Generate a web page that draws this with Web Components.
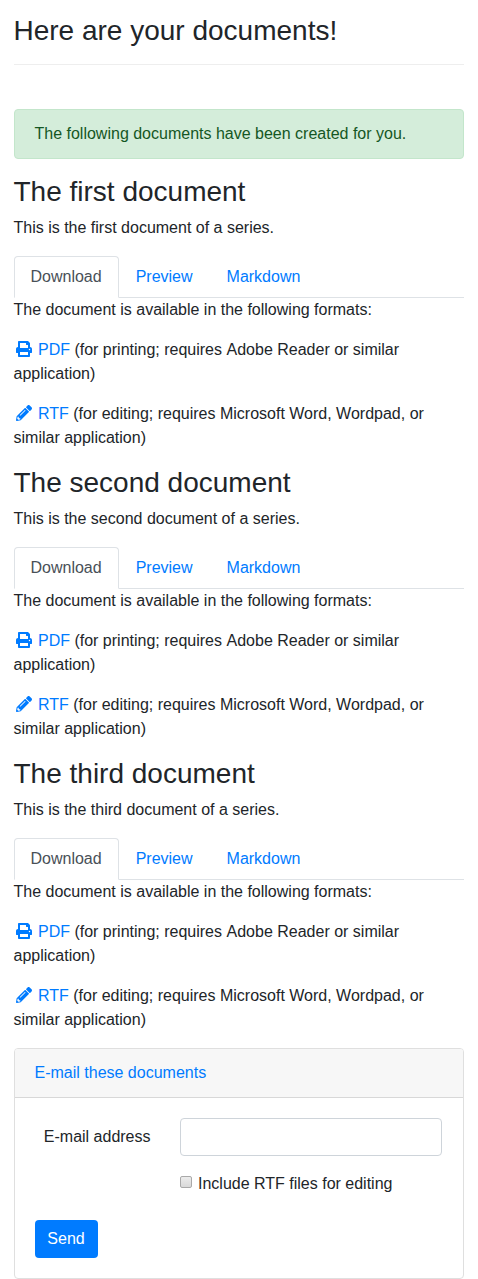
<!DOCTYPE html>
<html lang="en">
<head>
<meta charset="utf-8">
<title>Here are your documents!</title>
<style>
body { margin: 0; background: #fff; color: #212529; font: 16px/24px "Liberation Sans", Arial, sans-serif; }
</style>
</head>
<body>
<documents-page></documents-page>
<script>
const define = (name, html) => {
  const template = document.createElement('template');
  template.innerHTML = html;
  customElements.define(name, class extends HTMLElement {
    constructor() {
      super();
      this.attachShadow({ mode: 'open' }).append(template.content.cloneNode(true));
    }
  });
};

define('page-title', `
<style>
:host { display: block; padding-bottom: 17px; border-bottom: 1px solid #eee; margin-bottom: 44px; }
h1 { margin: 0; font-size: 28px; line-height: 33px; font-weight: 500; }
</style>
<h1><slot></slot></h1>`);

define('success-alert', `
<style>
:host { display: block; padding: 12px 20px; border: 1px solid #c3e6cb; border-radius: 4px; background: #d4edda; color: #155724; margin-bottom: 16px; }
</style>
<slot></slot>`);

define('print-icon', `
<style>
:host { display: inline-block; width: 20px; height: 16px; vertical-align: -2px; color: #007bff; }
svg { display: block; width: 16px; height: 16px; margin: 0 auto; }
</style>
<svg viewBox="0 0 512 512" fill="currentColor"><path d="M448 192V77.25c0-8.49-3.37-16.62-9.37-22.63L393.37 9.37c-6-6-14.14-9.37-22.63-9.37H96C78.33 0 64 14.33 64 32v160c-35.35 0-64 28.65-64 64v112c0 8.84 7.16 16 16 16h48v96c0 17.67 14.33 32 32 32h320c17.67 0 32-14.33 32-32v-96h48c8.84 0 16-7.16 16-16V256c0-35.35-28.65-64-64-64zm-64 256H128v-96h256v96zm0-224H128V64h192v48c0 8.84 7.16 16 16 16h48v96zm48 72c-13.25 0-24-10.75-24-24 0-13.26 10.75-24 24-24s24 10.74 24 24c0 13.25-10.75 24-24 24z"/></svg>`);

define('pencil-icon', `
<style>
:host { display: inline-block; width: 20px; height: 16px; vertical-align: -2px; color: #007bff; }
svg { display: block; width: 16px; height: 16px; margin: 0 auto; }
</style>
<svg viewBox="0 0 512 512" fill="currentColor"><path d="M497.9 142.1l-46.1 46.1c-4.7 4.7-12.3 4.7-17 0l-111-111c-4.7-4.7-4.7-12.3 0-17l46.1-46.1c18.7-18.7 49.1-18.7 67.9 0l60.1 60.1c18.8 18.7 18.8 49.1 0 67.9zM284.2 99.8L21.6 362.4.4 483.9c-2.9 16.4 11.4 30.6 27.8 27.8l121.5-21.3 262.6-262.6c4.7-4.7 4.7-12.3 0-17l-111-111c-4.8-4.7-12.4-4.7-17.1 0zM124.1 339.9c-5.5-5.5-5.5-14.3 0-19.8l154-154c5.5-5.5 14.3-5.5 19.8 0s5.5 14.3 0 19.8l-154 154c-5.5 5.5-14.3 5.5-19.8 0zM88 424h48v36.3l-64.5 11.3-31.1-31.1L51.7 376H88v48z"/></svg>`);

define('document-tabs', `
<style>
:host { display: flex; height: 41px; border-bottom: 1px solid #dee2e6; }
a { box-sizing: border-box; height: 42px; padding: 8px 16px; border: 1px solid transparent; border-radius: 4px 4px 0 0; color: #007bff; text-decoration: none; }
a.active { color: #495057; background: #fff; border-color: #dee2e6 #dee2e6 #fff; }
</style>
<a class="active" href="#">Download</a><a href="#">Preview</a><a href="#">Markdown</a>`);

define('document-section', `
<style>
:host { display: block; }
h2 { margin: 0 0 8px; font-size: 28px; line-height: 33px; font-weight: 500; }
p { margin: 0 0 16px; }
.format { height: 48px; }
.product { margin-left: 0.05px; }
a { color: #007bff; text-decoration: none; }
</style>
<h2><slot name="heading"></slot></h2>
<p><slot></slot></p>
<document-tabs></document-tabs>
<p>The document is available in the following formats:</p>
<p class="format"><print-icon></print-icon> <a href="#">PDF</a> (for printing; requires <span class="product">Adobe Reader or similar</span><br>application)</p>
<p class="format"><pencil-icon></pencil-icon> <a href="#">RTF</a> (for editing; requires Microsoft Word, Wordpad, or<br>similar application)</p>`);

define('check-option', `
<style>
:host { display: flex; }
input { appearance: none; box-sizing: border-box; flex: none; width: 12px; height: 12px; margin: 4px 6px 0 0; border: 1px solid #a9a9a9; border-radius: 2px; background: linear-gradient(#ececec, #d9d9d9); }
</style>
<input id="option" type="checkbox"><label for="option"><slot></slot></label>`);

define('email-card', `
<style>
:host { display: block; border: 1px solid #dfdfdf; border-radius: 4px; background: #fff; }
header { padding: 12px 20px; border-bottom: 1px solid #d8d8d8; border-radius: 3px 3px 0 0; background: #f7f7f7; }
a { color: #007bff; text-decoration: none; }
form { padding: 20px; }
.fields { display: grid; grid-template-columns: 116px 262px; column-gap: 29.5px; row-gap: 16px; }
.label { padding-top: 7px; text-align: right; }
.text { box-sizing: border-box; width: 100%; height: 38px; margin: 0; padding: 6px 12px; border: 1px solid #ced4da; border-radius: 4px; background: #fff; font: inherit; }
check-option { grid-column: 2; }
button { display: block; width: 63px; height: 38px; margin: 24px 0 0; padding: 0; border: 0; border-radius: 4px; background: #007bff; color: #fff; font: inherit; }
</style>
<header><a href="#">E-mail these documents</a></header>
<form>
  <div class="fields">
    <label class="label" for="email">E-mail address</label>
    <input class="text" id="email" type="email">
    <check-option>Include RTF files for editing</check-option>
  </div>
  <button type="button">Send</button>
</form>`);

define('documents-page', `
<style>:host { display: block; width: 450px; padding: 14px 14px 0 13.5px; }</style>
<page-title>Here are your documents!</page-title>
<success-alert>The following documents have been created for you.</success-alert>
<document-section><span slot="heading">The first document</span>This is the first document of a series.</document-section>
<document-section><span slot="heading">The second document</span>This is the second document of a series.</document-section>
<document-section><span slot="heading">The third document</span>This is the third document of a series.</document-section>
<email-card></email-card>`);
</script>
</body>
</html>
